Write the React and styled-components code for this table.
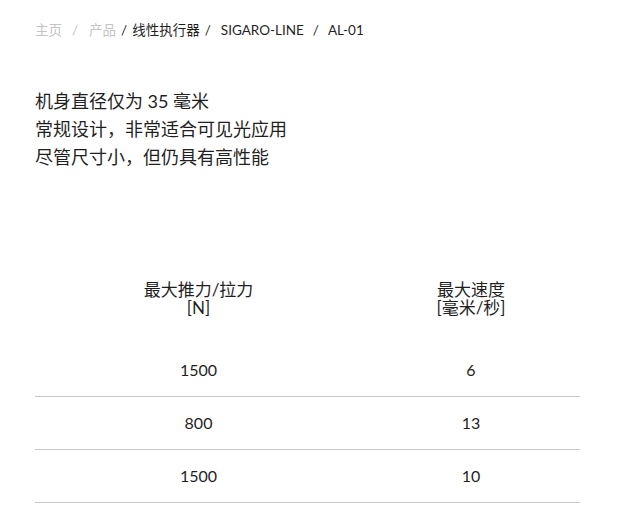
import React from "react";
import styled, { createGlobalStyle } from "styled-components";

const Global = createGlobalStyle`
  html, body { margin: 0; padding: 0; background: #fff; }
  body { font-family: Lato, "Noto Sans", "Noto Sans CJK SC", sans-serif; color: #1f1f1f; }
`;

const Page = styled.div`
  width: 545px;
  padding: 20px 0 0 35px;
`;

const Crumbs = styled.nav`
  display: flex;
  align-items: center;
  font-size: 13.5px;
  line-height: 20px;
  height: 20px;
`;

const Crumb = styled.span`
  color: ${(p) => (p.$muted ? "#c4c4c4" : "#1f1f1f")};
`;

const Sep = styled.span`
  color: ${(p) => (p.$muted ? "#c4c4c4" : "#1f1f1f")};
  margin: 0 ${(p) => p.$r || 8}px 0 ${(p) => p.$l || 8}px;
`;

const Intro = styled.div`
  margin-top: 47px;
  font-size: 18px;
  line-height: 28px;
  color: #1f1f1f;
`;

const Table = styled.div`
  margin-top: 110px;
  display: grid;
  grid-template-columns: 327px 218px;
`;

const HeadCell = styled.div`
  text-align: center;
  font-size: 17px;
  line-height: 18px;
  padding-bottom: 27px;
  color: #1f1f1f;
`;

const Cell = styled.div`
  text-align: center;
  font-size: 16px;
  height: 52px;
  line-height: 52px;
  border-bottom: 1px solid #c8c8c8;
  color: #1f1f1f;
`;

const rows = [
  ["1500", "6"],
  ["800", "13"],
  ["1500", "10"],
];

export default function App() {
  return (
    <>
      <Global />
      <Page>
        <Crumbs>
          <Crumb $muted>主页</Crumb>
          <Sep $muted $l={10} $r={11}>/</Sep>
          <Crumb $muted>产品</Crumb>
          <Sep $l={5} $r={5}>/</Sep>
          <Crumb>线性执行器</Crumb>
          <Sep $l={5} $r={10}>/</Sep>
          <Crumb>SIGARO-LINE</Crumb>
          <Sep $l={9} $r={9}>/</Sep>
          <Crumb>AL-01</Crumb>
        </Crumbs>
        <Intro>
          机身直径仅为 35 毫米
          <br />
          常规设计，非常适合可见光应用
          <br />
          尽管尺寸小，但仍具有高性能
        </Intro>
        <Table>
          <HeadCell>
            最大推力/拉力
            <br />
            [N]
          </HeadCell>
          <HeadCell>
            最大速度
            <br />
            [毫米/秒]
          </HeadCell>
          {rows.map((r, i) => (
            <React.Fragment key={i}>
              <Cell>{r[0]}</Cell>
              <Cell>{r[1]}</Cell>
            </React.Fragment>
          ))}
        </Table>
      </Page>
    </>
  );
}
